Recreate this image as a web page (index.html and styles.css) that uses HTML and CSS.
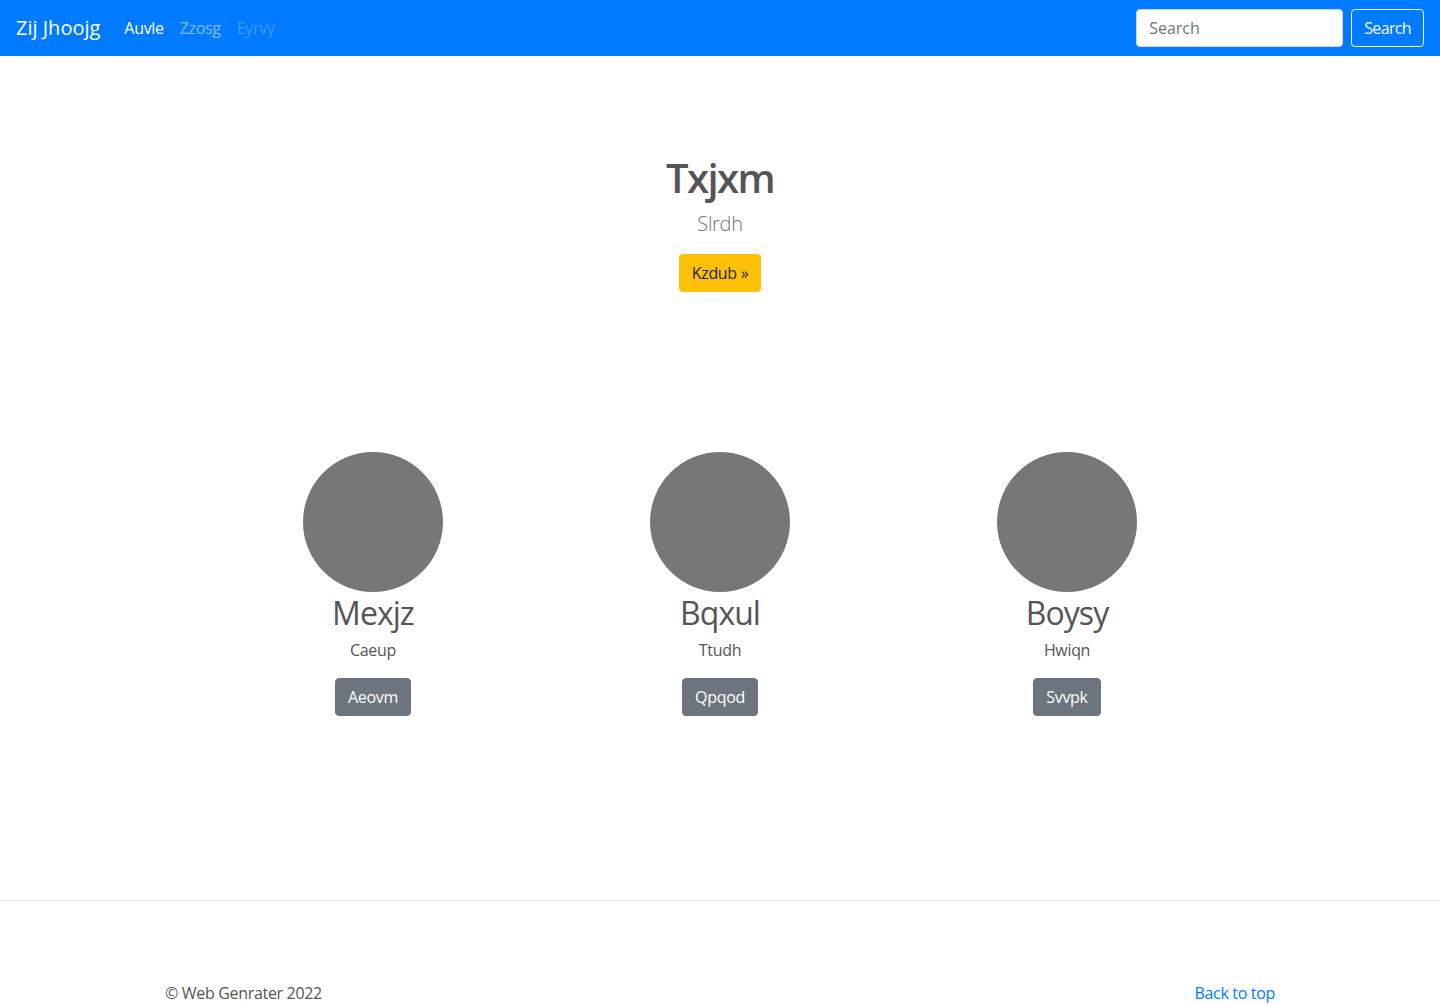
FILE: index.html
```html
<!DOCTYPE html>
<html lang="en">
<head>
<meta charset="utf-8">
<title>Zij Jhoojg</title>
<link rel="stylesheet" href="styles.css">
</head>
<body>
<header class="navbar">
  <a class="brand" href="#">Zij Jhoojg</a>
  <nav class="nav">
    <a class="nav-link active" href="#">Auvle</a>
    <a class="nav-link" href="#">Zzosg</a>
    <a class="nav-link disabled" href="#">Eyrvy</a>
  </nav>
  <form class="search">
    <input class="search-input" type="text" placeholder="Search">
    <button class="btn btn-outline-light" type="button">Search</button>
  </form>
</header>

<main>
  <section class="hero">
    <h1 class="hero-title">Txjxm</h1>
    <p class="lead">Slrdh</p>
    <a class="btn btn-warning" href="#">Kzdub &raquo;</a>
  </section>

  <section class="people">
    <div class="person">
      <div class="avatar"></div>
      <h2 class="person-name">Mexjz</h2>
      <p class="person-text">Caeup</p>
      <a class="btn btn-secondary" href="#">Aeovm</a>
    </div>
    <div class="person">
      <div class="avatar"></div>
      <h2 class="person-name">Bqxul</h2>
      <p class="person-text">Ttudh</p>
      <a class="btn btn-secondary" href="#">Qpqod</a>
    </div>
    <div class="person">
      <div class="avatar"></div>
      <h2 class="person-name">Boysy</h2>
      <p class="person-text">Hwiqn</p>
      <a class="btn btn-secondary" href="#">Svvpk</a>
    </div>
  </section>
</main>

<hr class="divider">

<footer class="footer">
  <p class="copyright">&copy; Web Genrater 2022</p>
  <a class="back-top" href="#">Back to top</a>
</footer>
</body>
</html>
```

FILE: styles.css
```css
* { box-sizing: border-box; }

body {
  margin: 0;
  font-family: "Open Sans", "Noto Sans", Arial, sans-serif;
  font-size: 16px;
  line-height: 1.5;
  color: #555;
  background: #fff;
  letter-spacing: -0.02em;
}

a { text-decoration: none; }

.navbar {
  height: 56px;
  background: #007bff;
  display: flex;
  align-items: center;
  padding: 0 16px;
}

.brand {
  color: #fff;
  font-size: 20px;
  line-height: 30px;
  margin-right: 16px;
  letter-spacing: 0;
}

.nav {
  display: flex;
  flex: 1;
}

.nav-link {
  padding: 8px;
  color: rgba(255, 255, 255, 0.5);
  line-height: 24px;
}

.nav-link.active { color: #fff; }
.nav-link.disabled { color: rgba(255, 255, 255, 0.25); }

.search {
  display: flex;
  align-items: center;
}

.search-input {
  width: 207px;
  height: 38px;
  padding: 6px 12px;
  border: 1px solid #ced4da;
  border-radius: 4px;
  font: inherit;
  color: #495057;
  margin-right: 8px;
  background: #fff;
}

.search-input::placeholder { color: #6c757d; }

.btn {
  display: inline-block;
  height: 38px;
  padding: 6px 12px;
  border: 1px solid transparent;
  border-radius: 4px;
  font: inherit;
  line-height: 24px;
  text-align: center;
  cursor: pointer;
}

.btn-outline-light {
  background: transparent;
  border-color: #f8f9fa;
  color: #f8f9fa;
  letter-spacing: -0.04em;
}

.btn-warning {
  background: #ffc107;
  border-color: #ffc107;
  color: #212529;
}

.btn-secondary {
  background: #6c757d;
  border-color: #6c757d;
  color: #fff;
}

.hero {
  text-align: center;
  padding-top: 98px;
}

.hero-title {
  margin: 0 0 8px;
  font-size: 40px;
  font-weight: 600;
  line-height: 48px;
  color: #555;
  letter-spacing: -0.04em;
}

.lead {
  margin: 0 0 14px;
  font-size: 20px;
  font-weight: 300;
  line-height: 28px;
  padding-bottom: 2px;
  color: #6c757d;
}

.people {
  width: 1041px;
  margin: 160px auto 0;
  display: grid;
  grid-template-columns: repeat(3, 1fr);
  text-align: center;
}

.person {
  display: flex;
  flex-direction: column;
  align-items: center;
}

.avatar {
  width: 140px;
  height: 140px;
  border-radius: 50%;
  background: #777;
}

.person-name {
  margin: 2px 0 8px;
  font-size: 32px;
  font-weight: 400;
  line-height: 38px;
  color: #555;
  letter-spacing: -0.03em;
}

.person-text {
  margin: -2px 0 16px;
}

.divider {
  margin: 184px 0 0;
  border: 0;
  border-top: 1px solid #e5e5e5;
}

.footer {
  width: 1110px;
  margin: 0 auto;
  padding-top: 80px;
  display: flex;
  justify-content: space-between;
  align-items: baseline;
}

.copyright { margin: 0; }

.back-top { color: #007bff; }
```
